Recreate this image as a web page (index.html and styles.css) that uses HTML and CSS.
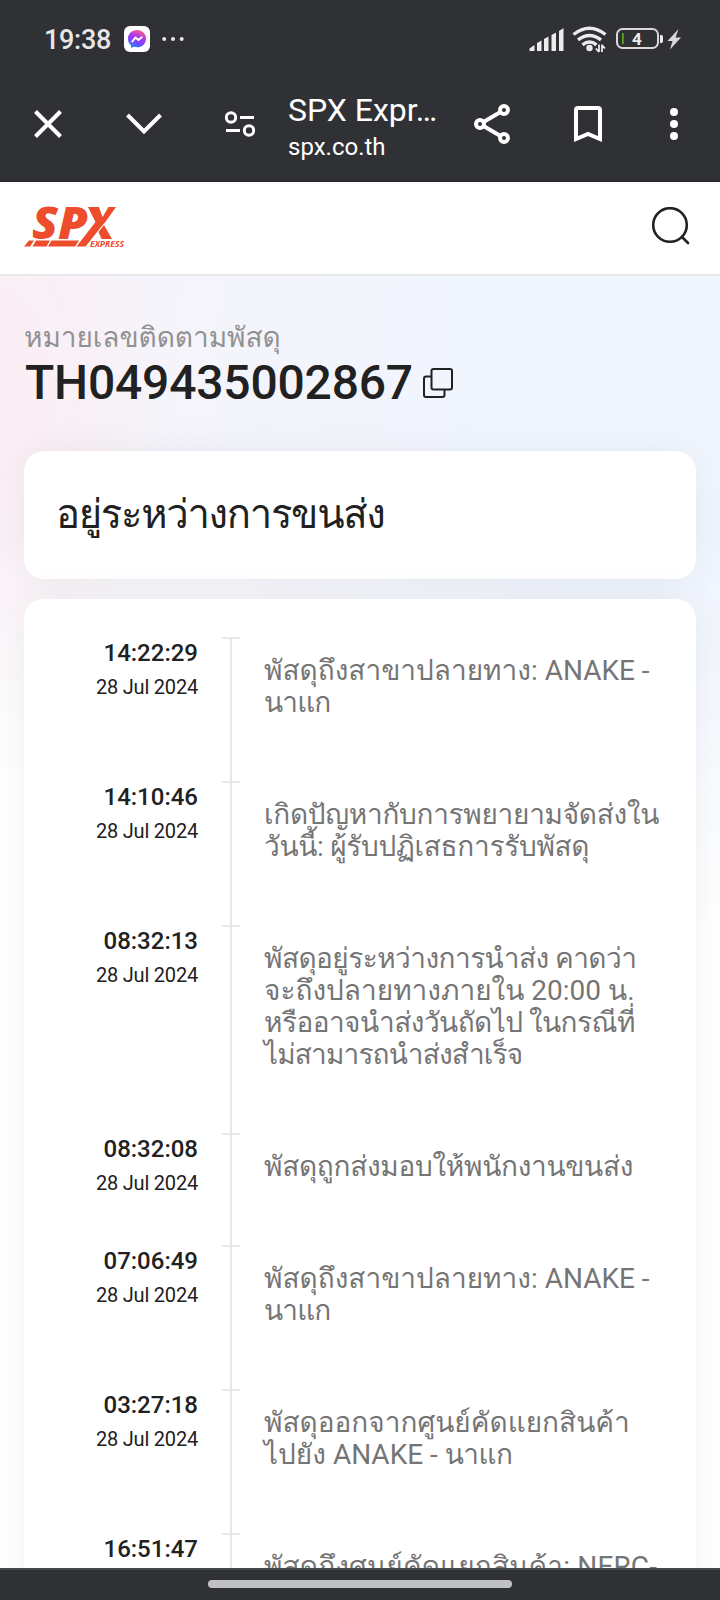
FILE: index.html
```
<!DOCTYPE html>
<html lang="th">
<head>
    <meta charset="UTF-8">
    <meta name="viewport" content="width=device-width, initial-scale=1.0">
    <title>SPX Express</title>
    <link rel="stylesheet" href="styles.css">
</head>
<body>
<div class="screen">

    <div class="status-bar">
        <span class="clock">19:38</span>
        <svg class="messenger" width="26" height="26" viewBox="0 0 26 26">
            <defs>
                <linearGradient id="msg" x1="0.3" y1="1" x2="0.7" y2="0">
                    <stop offset="0" stop-color="#1e88ff"/>
                    <stop offset="0.4" stop-color="#8a3cff"/>
                    <stop offset="0.65" stop-color="#b23be8"/>
                    <stop offset="1" stop-color="#ff6474"/>
                </linearGradient>
            </defs>
            <rect width="26" height="26" rx="6" fill="#fff"/>
            <path d="M13 4c-5.200 0-9 3.700-9 8.700 0 2.700 1.100 5 3 6.500V22l2.800-1.200c1 .3 2.100.5 3.200.5 5.200 0 9-3.700 9-8.600S18.200 4 13 4z" fill="url(#msg)"/>
            <path d="M8.300 15.500l3.100-3.900 3 2.500 3.300-2.900" fill="none" stroke="#fff" stroke-width="2" stroke-linejoin="round" stroke-linecap="round"/>
        </svg>
        <svg class="dots" width="22" height="6" viewBox="0 0 22 6" fill="#e6e6e6">
            <circle cx="2.200" cy="3" r="2"/><circle cx="11" cy="3" r="2"/><circle cx="19.700" cy="3" r="2"/>
        </svg>
        <svg class="status-icons" width="156" height="28" viewBox="0 0 156 28" fill="#ececec">
            <path d="M.5 25v-2.500l5-3.500v6z"/>
            <path d="M8 25v-8l4.500-2.500V25z"/>
            <path d="M15 25V13l4.500-2.500V25z"/>
            <path d="M22.500 25V9L27 6.500V25z"/>
            <path d="M30 25V5l4.500-3v23z"/>
            <g fill="none" stroke="#ececec" stroke-width="3.400">
                <path d="M44.500 8.500Q60.500-4 76.500 8.500"/>
                <path d="M49 13.800Q60.500 5 72 13.800"/>
                <path d="M53.500 18.800Q60.500 13.300 67.500 18.800"/>
            </g>
            <circle cx="60.500" cy="22" r="3.200"/>
            <path d="M70 18.500V26M73 26V18.500M66.800 22.500L70 26M73 19l3 3.500" stroke="#ececec" stroke-width="1.800" fill="none"/>
            <rect x="88" y="3" width="41" height="19" rx="5.500" fill="none" stroke="#d8d8d8" stroke-width="2"/>
            <rect x="93" y="7" width="1.800" height="11" fill="#54a51c"/>
            <path d="M131 9h1.500q1.500 0 1.500 2v4q0 2-1.500 2H131z"/>
            <path d="M149.500 3l-11 12h5l-2.500 8.500L152 11.500h-5.500z" fill="#d8d8d8"/>
            <text x="108" y="18.600" text-anchor="middle" class="battery-text">4</text>
        </svg>
    </div>

    <div class="toolbar">
        <svg class="ico-close" width="28" height="28" viewBox="0 0 28 28"><path d="M1.500 1.500l25 25M26.500 1.500l-25 25"/></svg>
        <svg class="ico-down" width="36" height="22" viewBox="0 0 36 22"><path d="M1.500 2L18 18.500 34.500 2"/></svg>
        <svg class="ico-tune" width="30" height="26" viewBox="0 0 30 26"><circle cx="6" cy="6.500" r="4.700"/><circle cx="24" cy="19.500" r="4.700"/><path d="M15 6.500h14M1 19.500h14"/></svg>
        <div class="page-info">
            <div class="page-title">SPX Expr…</div>
            <div class="page-url">spx.co.th</div>
        </div>
        <svg class="ico-share" width="36" height="40" viewBox="0 0 36 40"><path d="M9.500 18L26.500 8M9.500 22l17 10"/><circle cx="30" cy="6" r="4"/><circle cx="6" cy="20" r="4"/><circle cx="30" cy="34" r="4"/></svg>
        <svg class="ico-mark" width="28" height="36" viewBox="0 0 28 36"><path d="M2 33V4q0-2 2-2h20q2 0 2 2v29l-12-5z"/></svg>
        <svg class="ico-more" width="8" height="32" viewBox="0 0 8 32"><circle cx="4" cy="4" r="4"/><circle cx="4" cy="16" r="4"/><circle cx="4" cy="28" r="4"/></svg>
    </div>

    <div class="site-header">
        <svg class="logo" width="102" height="42" viewBox="0 0 102 42" fill="#ee4d2d">
            <g class="logo-text">
                <text x="8" y="32.500" textLength="26" lengthAdjust="spacingAndGlyphs">S</text>
                <text x="34" y="32.500" textLength="30" lengthAdjust="spacingAndGlyphs">P</text>
            </g>
            <!-- the X mark, its long leg runs down into the underline -->
            <path d="M64 1h11l3.500 10L84.500 1H92L81 16.500l-1.500 1.500-18 22.500H52.500L71.500 16z"/>
            <path d="M80 19l8 14H77.500L74.500 26z"/>
            <path d="M5 34.500h5L6 40.500H0zM12 34.500h14L22.500 40.500H8.500zM27.500 34.500H55L51 40.500H24z"/>
            <text x="66" y="40.500" class="logo-sub" textLength="34" lengthAdjust="spacingAndGlyphs">EXPRESS</text>
        </svg>
        <svg class="ico-search" width="40" height="40" viewBox="0 0 40 40"><circle cx="18" cy="18" r="16.800"/><path d="M30 30l6 6"/></svg>
    </div>

    <div class="content">
        <div class="tracking-label">หมายเลขติดตามพัสดุ</div>
        <div class="tracking-number">
            <span class="number">TH049435002867</span>
            <svg class="ico-copy" width="30" height="30" viewBox="0 0 30 30"><path d="M8 8.500H3q-2 0-2 2V27q0 2 2 2h16.500q2 0 2-2v-5"/><rect x="8.500" y="1" width="20.500" height="20.500" rx="2"/></svg>
        </div>

        <div class="card status-card"><span>อยู่ระหว่างการขนส่ง</span></div>

        <div class="card timeline">
            <div class="event">
                <div class="when"><div class="time">14:22:29</div><div class="date">28 Jul 2024</div></div>
                <div class="axis"></div>
                <div class="desc">พัสดุถึงสาขาปลายทาง: ANAKE -<br><span class="tighter">นาแก</span></div>
            </div>
            <div class="event">
                <div class="when"><div class="time">14:10:46</div><div class="date">28 Jul 2024</div></div>
                <div class="axis"></div>
                <div class="desc"><span class="snug">เกิดปัญหากับการพยายามจัดส่งใน<br>วันนี้: ผู้รับปฏิเสธการรับพัสดุ</span></div>
            </div>
            <div class="event">
                <div class="when"><div class="time">08:32:13</div><div class="date">28 Jul 2024</div></div>
                <div class="axis"></div>
                <div class="desc"><span class="tight">พัสดุอยู่ระหว่างการนำส่ง คาดว่า</span><br>จะถึงปลายทางภายใน 20:00 น.<br><span class="tight">หรืออาจนำส่งวันถัดไป ในกรณีที่<br></span><span class="tighter">ไม่สามารถนำส่งสำเร็จ</span></div>
            </div>
            <div class="event">
                <div class="when"><div class="time">08:32:08</div><div class="date">28 Jul 2024</div></div>
                <div class="axis"></div>
                <div class="desc"><span class="snug">พัสดุถูกส่งมอบให้พนักงานขนส่ง</span></div>
            </div>
            <div class="event">
                <div class="when"><div class="time">07:06:49</div><div class="date">28 Jul 2024</div></div>
                <div class="axis"></div>
                <div class="desc">พัสดุถึงสาขาปลายทาง: ANAKE -<br><span class="tighter">นาแก</span></div>
            </div>
            <div class="event">
                <div class="when"><div class="time">03:27:18</div><div class="date">28 Jul 2024</div></div>
                <div class="axis"></div>
                <div class="desc">พัสดุออกจากศูนย์คัดแยกสินค้า<br>ไปยัง ANAKE - <span class="tight">นาแก</span></div>
            </div>
            <div class="event">
                <div class="when"><div class="time">16:51:47</div></div>
                <div class="axis"></div>
                <div class="desc"><span class="loose">พัสดุถึงศูนย์คัดแยกสินค้า: NERC-</span></div>
            </div>
        </div>
    </div>

    <div class="nav-bar"><div class="handle"></div></div>
</div>
</body>
</html>
```
FILE: styles.css
```
* {
    box-sizing: border-box;
}

body {
    margin: 0;
    font-family: Roboto, Loma, "Noto Sans Thai Looped", sans-serif;
    color: #212121;
}

svg {
    display: block;
    flex: none;
}

.screen {
    width: 720px;
    height: 1600px;
    display: flex;
    flex-direction: column;
    overflow: hidden;
    background: #fff;
}

/* Phone status bar */
.status-bar {
    flex: none;
    height: 78px;
    display: flex;
    align-items: center;
    padding: 0 35px 0 44px;
    background: #303135;
    color: #e6e6e6;
}

.clock {
    width: 68px;
    padding-top: 2px;
    font-size: 27px;
    font-weight: 500;
    letter-spacing: -0.3px;
    line-height: 32px;
    white-space: nowrap;
}

.messenger {
    margin-left: 12px;
}

.dots {
    margin-left: 12px;
}

.status-icons {
    margin-left: auto;
    margin-top: 2px;
}

.battery-text {
    font-size: 17px;
    font-weight: 700;
}

/* Browser toolbar */
.toolbar {
    flex: none;
    height: 104px;
    display: flex;
    align-items: center;
    padding: 0 42px 10px 34px;
    background: #303135;
    border-bottom: 2px solid #2a2a2e;
    color: #fff;
}

.toolbar svg {
    fill: none;
    stroke: #fff;
    stroke-width: 4;
}

.ico-down {
    margin-left: 64px;
}

.toolbar .ico-tune {
    margin-left: 63px;
    stroke-width: 3;
}

.page-info {
    width: 152px;
    margin-left: 33px;
    padding-top: 8px;
    white-space: nowrap;
}

.page-title {
    font-size: 32px;
    line-height: 38px;
}

.page-url {
    font-size: 24px;
    line-height: 36px;
}

.ico-share {
    margin-left: 34px;
}

.ico-mark {
    margin-left: 64px;
}

.toolbar .ico-more {
    margin-left: auto;
    fill: #fff;
    stroke: none;
}

/* Site header */
.site-header {
    flex: none;
    height: 94px;
    display: flex;
    align-items: center;
    justify-content: space-between;
    padding: 0 28px 2px 24px;
    border-bottom: 2px solid #e8e8e8;
    background: #fff;
}

.logo {
    overflow: visible;
}

.logo-text {
    font-family: "Open Sans", sans-serif;
    font-size: 44px;
    font-weight: 800;
    font-style: italic;
}

.logo-sub {
    font-family: "Open Sans", sans-serif;
    font-size: 8.500px;
    font-weight: 700;
    font-style: italic;
}

.ico-search {
    fill: none;
    stroke: #212121;
    stroke-width: 2.600;
    stroke-linecap: round;
}

/* Tracking page */
.content {
    flex: 1;
    min-height: 0;
    overflow: hidden;
    padding: 42px 24px 0;
    background:
        radial-gradient(ellipse 160px 330px at 0 120px, rgba(255, 234, 242, 0.7), rgba(255, 234, 242, 0)),
        radial-gradient(circle 560px at 660px 90px, #f0f5fe 30%, rgba(240, 245, 254, 0)),
        linear-gradient(#f6f4fa 0, #f6f4fa 200px, #fff 500px);
}

.tracking-label {
    height: 40px;
    font-size: 28px;
    line-height: 40px;
    letter-spacing: -0.05px;
    color: #919191;
    white-space: nowrap;
}

.tracking-number {
    height: 50px;
    display: flex;
    align-items: center;
    gap: 12px;
    font-size: 48px;
    font-weight: 500;
    line-height: 50px;
    letter-spacing: -0.2px;
}

.number {
    width: 387px;
    padding-left: 1px;
}

.ico-copy {
    fill: none;
    stroke: #212121;
    stroke-width: 2;
}

.card {
    border-radius: 20px;
    background: #fff;
    box-shadow: 0 0 40px rgba(0, 0, 0, 0.06);
}

.status-card {
    height: 128px;
    display: flex;
    align-items: center;
    margin-top: 43px;
    padding-left: 32px;
    font-size: 40px;
    line-height: 48px;
    letter-spacing: -1.300px;
    white-space: nowrap;
}

.timeline {
    height: 1300px;
    margin-top: 20px;
    padding-top: 38px;
}

.event {
    display: flex;
}

.when {
    width: 174px;
    text-align: right;
}

.time {
    font-size: 24px;
    font-weight: 500;
    line-height: 32px;
}

.date {
    margin-top: 2px;
    font-size: 20px;
    letter-spacing: -0.2px;
    line-height: 32px;
}

.axis {
    width: 18px;
    margin: 0 24px;
    border-top: 2px solid rgba(0, 0, 0, 0.09);
    background: linear-gradient(#e7e7e7, #e7e7e7) center / 2px 100% no-repeat;
}

.desc {
    padding: 18px 0 62px;
    font-size: 28px;
    line-height: 32px;
    color: #757575;
    white-space: nowrap;
}

.loose {
    letter-spacing: 0.15px;
}

.snug {
    letter-spacing: -0.3px;
}

.tight {
    letter-spacing: -0.55px;
}

.tighter {
    letter-spacing: -0.85px;
}

/* Gesture bar */
.nav-bar {
    flex: none;
    height: 32px;
    display: flex;
    justify-content: center;
    padding-top: 10px;
    background: #303135;
    border-top: 2px solid #45494b;
}

.handle {
    width: 304px;
    height: 8px;
    border-radius: 4px;
    background: #c0c1c3;
}
```
